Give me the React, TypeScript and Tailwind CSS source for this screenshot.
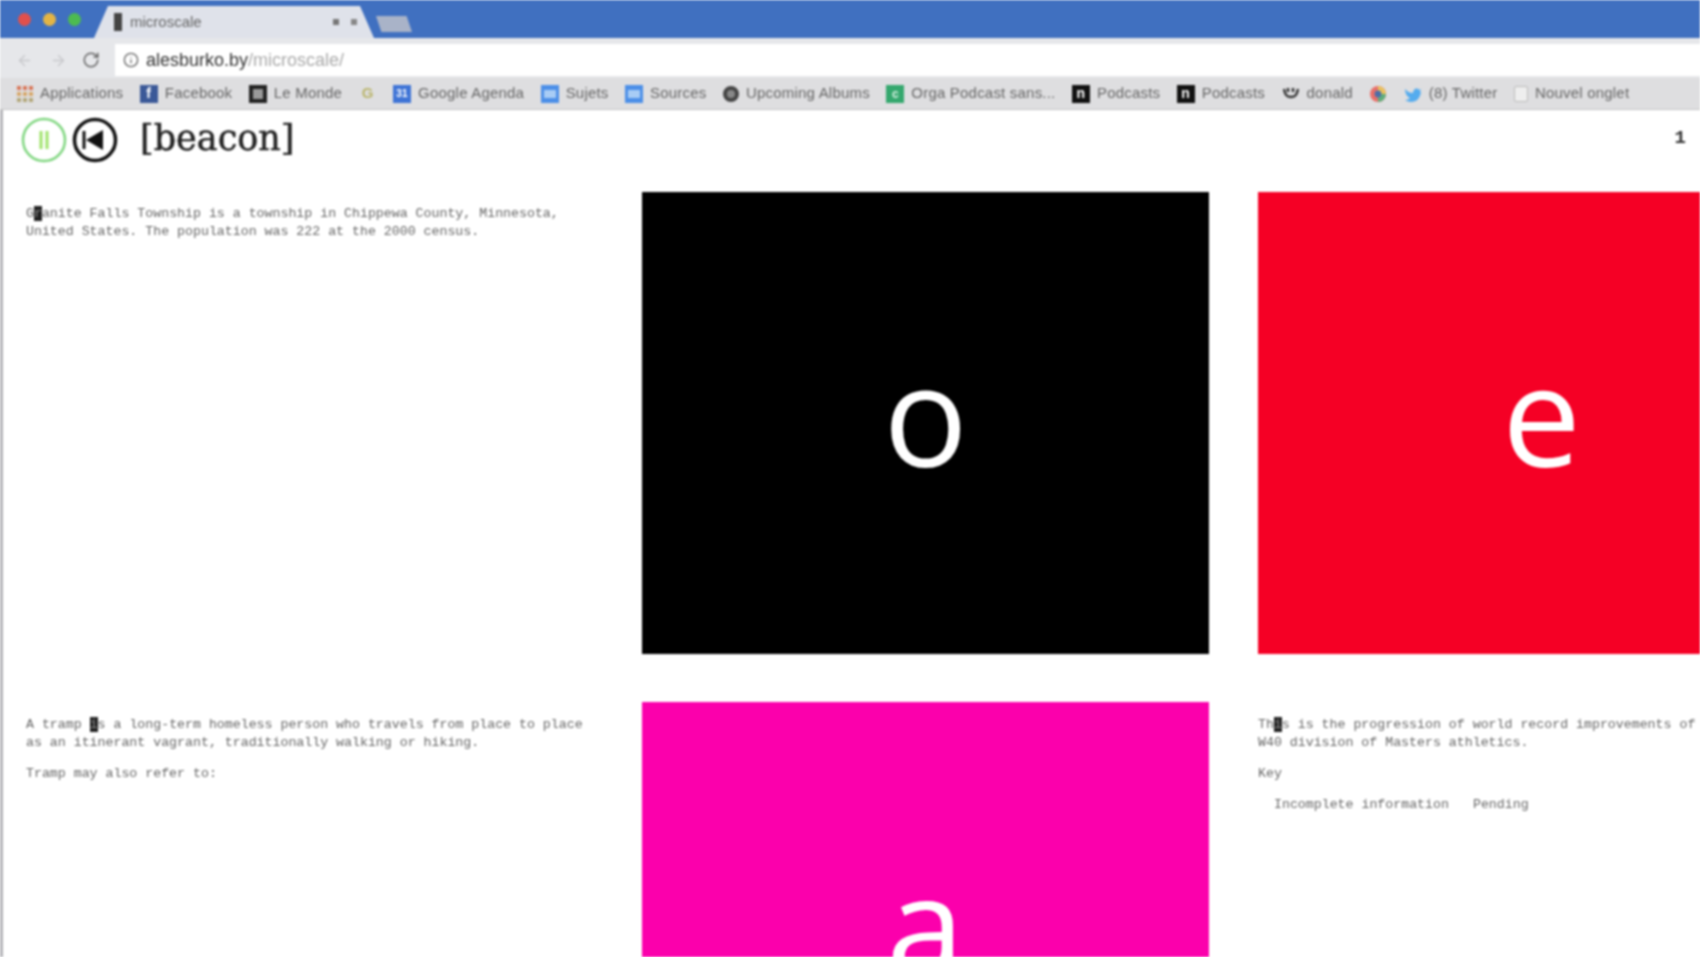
import { Info, RotateCw, ArrowLeft, ArrowRight } from "lucide-react";
import type { ReactNode } from "react";

function Square({ className, children }: { className: string; children?: ReactNode }) {
  return <span className={`flex h-[18px] w-[18px] shrink-0 items-center justify-center ${className}`}>{children}</span>;
}

const bookmarks: { icon: ReactNode; label?: string }[] = [
  {
    icon: (
      <span className="grid h-4 w-4 shrink-0 grid-cols-3 gap-[2px]">
        {[0, 1, 2, 3, 4, 5, 6, 7, 8].map((i) => (
          <span key={i} className={i < 3 ? "bg-[#d9785a]" : i < 6 ? "bg-[#d8a86a]" : "bg-[#b3a77a]"} />
        ))}
      </span>
    ),
    label: "Applications",
  },
  { icon: <Square className="bg-[#3b5998] text-[14px] font-bold text-white">f</Square>, label: "Facebook" },
  { icon: <Square className="border-[4px] border-[#222] bg-[#999]" />, label: "Le Monde" },
  { icon: <span className="w-[18px] text-center text-[15px] font-bold text-[#b9b46a]">G</span> },
  { icon: <Square className="bg-[#3f74d6] text-[10px] font-bold text-white">31</Square>, label: "Google Agenda" },
  { icon: <Square className="bg-[#4c8fe8]"><span className="h-2 w-3 bg-[#a8ccf5]" /></Square>, label: "Sujets" },
  { icon: <Square className="bg-[#4c8fe8]"><span className="h-2 w-3 bg-[#a8ccf5]" /></Square>, label: "Sources" },
  { icon: <span className="h-4 w-4 shrink-0 rounded-full border-[4px] border-[#444] bg-[#888]" />, label: "Upcoming Albums" },
  { icon: <Square className="bg-[#35a86e] text-[12px] font-bold text-[#d4f0e0]">c</Square>, label: "Orga Podcast sans..." },
  { icon: <Square className="w-[15px] bg-[#111] text-[14px] font-bold text-white">n</Square>, label: "Podcasts" },
  { icon: <Square className="w-[15px] bg-[#111] text-[14px] font-bold text-white">n</Square>, label: "Podcasts" },
  {
    icon: (
      <svg viewBox="0 0 18 18" className="h-[18px] w-[18px] shrink-0" fill="none" stroke="#333" strokeWidth="2.4">
        <path d="M2 4c1 5 2 8 7 8s6-3 7-8M6 3v4M11 3v4" />
      </svg>
    ),
    label: "donald",
  },
  {
    icon: (
      <svg viewBox="0 0 18 18" className="h-[18px] w-[18px] shrink-0">
        <circle cx="9" cy="9" r="8" fill="#e8706a" />
        <path d="M9 9V1a8 8 0 0 1 8 8z" fill="#e9c25f" />
        <path d="M9 9h8a8 8 0 0 1-8 8z" fill="#5fae7c" />
        <circle cx="9" cy="9" r="3.4" fill="#4c6ea8" />
      </svg>
    ),
  },
  {
    icon: (
      <svg viewBox="0 0 18 18" className="h-[18px] w-[18px] shrink-0" fill="#55acee">
        <path d="M1 4c3 3 5 4 8 4 0-4 4-6 6-3l2-1-1 3 1 0c-1 6-4 10-10 10-2 0-4-1-6-2 2 0 4-1 5-2C3 12 1 8 1 4z" />
      </svg>
    ),
    label: "(8) Twitter",
  },
  { icon: <span className="h-4 w-[14px] shrink-0 rounded-[2px] border border-[#bbb] bg-[#eee]" />, label: "Nouvel onglet" },
];

function Cursor({ children }: { children: string }) {
  return <span className="bg-[#222] text-[#888]">{children}</span>;
}

function LetterTile({ letter, className }: { letter: string; className: string }) {
  return (
    <div className={`flex h-[462px] items-center justify-center font-['Open_Sans',sans-serif] text-[140px] font-medium leading-none text-white ${className}`}>
      <span className="-translate-y-[10px]">{letter}</span>
    </div>
  );
}

export default function App() {
  return (
    <div className="h-[957px] w-[1700px] overflow-hidden bg-white blur-[0.9px]">
      {/* Tab strip */}
      <div className="flex h-[38px] items-center bg-[#4070c0] pl-[18px]">
        <div className="flex w-[76px] gap-[12px]">
          <span className="h-[13px] w-[13px] rounded-full bg-[#e0504c]" />
          <span className="h-[13px] w-[13px] rounded-full bg-[#e3b445]" />
          <span className="h-[13px] w-[13px] rounded-full bg-[#4dbb50]" />
        </div>
        <div className="mt-[6px] flex h-[32px] w-[280px] items-center bg-[#dfe2ea] pl-[20px] pr-[17px] [clip-path:polygon(0_100%,5%_0,95%_0,100%_100%)]">
          <span className="h-[18px] w-2 bg-[#444]" />
          <span className="ml-[8px] flex-1 font-['Liberation_Sans',sans-serif] text-[15px] text-[#666]">microscale</span>
          <span className="mr-[12px] h-[6px] w-[6px] bg-[#777]" />
          <span className="h-[6px] w-[6px] bg-[#888]" />
        </div>
        <div className="ml-[2px] mt-[10px] h-[16px] w-[36px] bg-[#a9b3c8] [clip-path:polygon(0_0,85%_0,100%_100%,15%_100%)]" />
      </div>

      {/* Address bar */}
      <div className="flex h-[40px] items-center bg-[#e6e7ea] pl-[16px] pt-[4px] text-[#c8c8cc]">
        <ArrowLeft size={17} />
        <ArrowRight size={17} className="ml-[17px]" />
        <RotateCw size={18} className="ml-[15px] text-[#666]" />
        <div className="ml-[15px] flex h-[32px] flex-1 items-center bg-white pl-[8px] font-['Liberation_Sans',sans-serif] text-[18px]">
          <Info size={16} className="text-[#666]" />
          <span className="ml-[7px] font-medium text-[#333]">alesburko.by</span>
          <span className="text-[#aaa]">/microscale/</span>
        </div>
      </div>

      {/* Bookmarks */}
      <div className="flex h-[32px] items-center gap-[16.5px] border-b border-[#c4c4c4] bg-[#dedee0] pl-[17px] font-['Liberation_Sans',sans-serif] text-[15px] tracking-[0.2px] text-[#666]">
        {bookmarks.map((b, i) => (
          <div key={i} className="flex items-center gap-[7px] whitespace-nowrap">
            {b.icon}
            {b.label && <span>{b.label}</span>}
          </div>
        ))}
      </div>

      {/* Page */}
      <div className="h-[847px] border-l-[3px] border-[#b4b4b8]">
        <header className="flex h-[82px] items-start pl-[18px] pr-[14px] pt-[7px]">
          <svg viewBox="0 0 46 46" className="h-[46px] w-[46px]" fill="none">
            <circle cx="23" cy="23" r="21" stroke="#7fd67f" strokeWidth="2.5" />
            <path d="M20 14v18M26 14v18" stroke="#9fe36a" strokeWidth="3" />
          </svg>
          <svg viewBox="0 0 46 46" className="ml-[5px] h-[46px] w-[46px]" fill="none">
            <circle cx="23" cy="23" r="20.5" stroke="#111" strokeWidth="3.5" />
            <path d="M12 14v18" stroke="#111" strokeWidth="3" />
            <path d="M14 23l17-10v20z" fill="#111" />
          </svg>
          <h1 className="ml-[22px] font-['DejaVu_Serif',serif] text-[35px] leading-[42px] text-[#222] [-webkit-text-stroke:0.5px_#222]">[beacon]</h1>
          <span className="ml-auto mt-[7px] font-['Liberation_Mono',monospace] text-[19px] font-bold text-[#333]">1</span>
        </header>

        <div className="grid grid-cols-[567px_567px_567px] gap-x-[49px] gap-y-[48px] pl-[23px] font-['Liberation_Mono',monospace] text-[13.25px] leading-[18px] text-[#666]">
          <div className="pt-[13px]">
            <p>
              G<Cursor>r</Cursor>anite Falls Township is a township in Chippewa County, Minnesota, United States. The population was 222 at the 2000 census.
            </p>
          </div>
          <LetterTile letter="o" className="bg-black" />
          <LetterTile letter="e" className="bg-[#f50025]" />

          <div className="pt-[14px]">
            <p>
              A tramp <Cursor>i</Cursor>s a long-term homeless person who travels from place to place as an itinerant vagrant, traditionally walking or hiking.
            </p>
            <p className="mt-[13px]">Tramp may also refer to:</p>
          </div>
          <LetterTile letter="a" className="bg-[#fb00ac]" />
          <div className="pt-[14px]">
            <p>
              Th<Cursor>i</Cursor>s is the progression of world record improvements of
              <br />
              W40 division of Masters athletics.
            </p>
            <p className="mt-[13px]">Key</p>
            <p className="mt-[13px] pl-4">Incomplete information<span className="ml-6">Pending</span></p>
          </div>
        </div>
      </div>
    </div>
  );
}
